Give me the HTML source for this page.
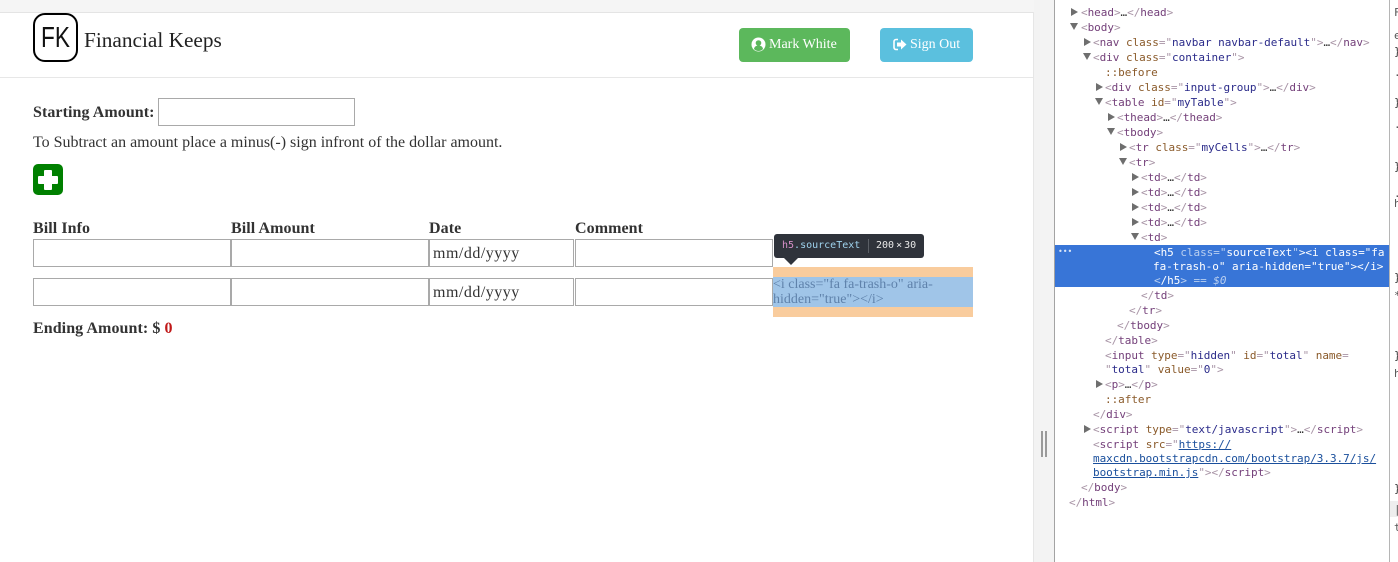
<!DOCTYPE html>
<html><head><meta charset="utf-8"><style>
html,body{margin:0;padding:0;width:1398px;height:562px;overflow:hidden;background:#fff}
div,span.b{position:absolute}
.s{font-family:"Liberation Serif",serif;color:#333;white-space:nowrap;font-size:16px;line-height:20px}
.bd{font-weight:bold;letter-spacing:.07px}
.i{border:1px solid #a9a9a9;background:#fff;box-sizing:border-box;height:28px}
.l{position:absolute;font:11px/15px "DejaVu Sans Mono",monospace;white-space:nowrap;color:#a894a6;letter-spacing:-.04px}
.l b{font-weight:normal;color:#74407a}.l u{text-decoration:none;color:#8a5a2a}.l q{quotes:none;color:#2b2b8a}
.l em{font-style:normal;color:#333}
.ar{position:absolute;width:0;height:0}
.r{border-left:7px solid #6e6e6e;border-top:4px solid transparent;border-bottom:4px solid transparent}
.d{border-top:7px solid #6e6e6e;border-left:4px solid transparent;border-right:4px solid transparent}
.sel,.sel b,.sel u,.sel q{color:#fff}
.dt{padding:4px 3px;letter-spacing:.5px}
</style></head><body>
<div style="left:0;top:0;width:1034px;height:12px;background:#f5f5f5;border-bottom:1px solid #e4e4e4"></div>
<div style="left:1034px;top:0;width:20px;height:562px;background:#f3f3f3"></div>
<div style="left:1033px;top:12px;width:1px;height:550px;background:#e6e6e6"></div>
<div style="left:0;top:77px;width:1033px;height:1px;background:#e7e7e7"></div>
<div style="left:33px;top:13px;width:45px;height:49px;box-sizing:border-box;border:2px solid #000;border-radius:12px"></div>
<div style="left:33px;top:13px;width:45px;height:49px;font:29px/50px 'Liberation Sans',sans-serif;color:#111;text-align:center;transform:scaleX(.78)">FK</div>
<div class="s" style="left:84px;top:27px;font-size:21.300px;line-height:26px;color:#222">Financial Keeps</div>
<div style="left:739px;top:28px;width:111px;height:34px;background:#5cb85c;border-radius:4px"></div>
<svg style="position:absolute;left:751px;top:37px" width="15" height="15" viewBox="0 0 15 15"><circle cx="7.500" cy="7.500" r="7" fill="#fff"/><circle cx="7.500" cy="6" r="2.800" fill="#5cb85c"/><path d="M3 12c.5-2.500 2-3.500 4.500-3.500S11.500 9.500 12 12a6 6 0 0 1-9 0z" fill="#5cb85c"/></svg>
<div class="s" style="left:769px;top:35px;font-size:14px;color:#fff">Mark White</div>
<div style="left:880px;top:28px;width:93px;height:34px;background:#5bc0de;border-radius:4px"></div>
<svg style="position:absolute;left:893px;top:38px" width="14" height="13" viewBox="0 0 14 13"><path d="M5 1.500H3a2 2 0 0 0-2 2v6a2 2 0 0 0 2 2h2" fill="none" stroke="#fff" stroke-width="1.600"/><path d="M4 4.500h4V1.500L13.500 6.500 8 11.500V8.500H4z" fill="#fff"/></svg>
<div class="s" style="left:910px;top:35px;font-size:14px;color:#fff">Sign Out</div>

<div class="s bd" style="left:33px;top:103px">Starting Amount:</div>
<div class="i" style="left:158px;top:98px;width:197px"></div>
<div class="s" style="left:33px;top:133px">To Subtract an amount place a minus(-) sign infront of the dollar amount.</div>
<div style="left:33px;top:164px;width:30px;height:31px;background:#008000;border-radius:5px"></div>
<div style="left:38px;top:176px;width:20px;height:8px;background:#fff;border-radius:1px"></div>
<div style="left:44px;top:170px;width:8px;height:20px;background:#fff;border-radius:1px"></div>

<div class="s bd" style="left:33px;top:219px">Bill Info</div>
<div class="s bd" style="left:231px;top:219px">Bill Amount</div>
<div class="s bd" style="left:429px;top:219px">Date</div>
<div class="s bd" style="left:575px;top:219px">Comment</div>

<div class="i" style="left:33px;top:239px;width:198px"></div>
<div class="i" style="left:231px;top:239px;width:198px"></div>
<div class="i s dt" style="left:429px;top:239px;width:145px">mm/dd/yyyy</div>
<div class="i" style="left:575px;top:239px;width:198px"></div>
<div class="i" style="left:33px;top:278px;width:198px"></div>
<div class="i" style="left:231px;top:278px;width:198px"></div>
<div class="i s dt" style="left:429px;top:278px;width:145px">mm/dd/yyyy</div>
<div class="i" style="left:575px;top:278px;width:198px"></div>

<div style="left:773px;top:267px;width:200px;height:50px;background:#f9cc9d"></div>
<div class="s" style="left:773px;top:277px;width:200px;height:30px;background:#a0c5e8;font-size:14px;line-height:15px;color:#5f82ab;white-space:normal">&lt;i class="fa fa-trash-o" aria-hidden="true"&gt;&lt;/i&gt;</div>
<div style="left:774px;top:234px;width:150px;height:24px;background:#2f333b;border-radius:3px"></div>
<div class="ar" style="left:784px;top:258px;border-top:7px solid #2f333b;border-left:7px solid transparent;border-right:7px solid transparent"></div>
<div style="left:782px;top:238px;font:10px/16px 'DejaVu Sans Mono',monospace;color:#9fd3ee;white-space:nowrap"><span style="color:#d78fc8">h5</span>.sourceText</div>
<div style="left:868px;top:239px;width:1px;height:14px;background:#5b5f66"></div>
<div style="left:876px;top:238px;font:10px/16px 'DejaVu Sans Mono',monospace;color:#e8e8e8;white-space:nowrap;word-spacing:-4px">200 × 30</div>

<div class="s bd" style="left:33px;top:319px">Ending Amount: $ <span style="color:#c01818">0</span></div>

<div style="left:1054px;top:0;width:1px;height:562px;background:#a3a3a3"></div>
<div style="left:1389px;top:0;width:1px;height:562px;background:#b5b5b5"></div>
<div style="left:1041px;top:431px;width:2px;height:26px;background:#9a9a9a"></div>
<div style="left:1045px;top:431px;width:2px;height:26px;background:#9a9a9a"></div>
<div style="left:1055px;top:245px;width:334px;height:42px;background:#3875d7"></div>
<div class="l" style="left:1058px;top:244px;color:#dbe6f7;font-size:8px">•••</div>

<div class="ar r" style="left:1071px;top:8px"></div><div class="l" style="left:1081px;top:5px">&lt;<b>head</b>&gt;<em>…</em>&lt;/<b>head</b>&gt;</div>
<div class="ar d" style="left:1070px;top:23px"></div><div class="l" style="left:1081px;top:20px">&lt;<b>body</b>&gt;</div>
<div class="ar r" style="left:1084px;top:38px"></div><div class="l" style="left:1093px;top:35px">&lt;<b>nav</b> <u>class</u>="<q>navbar navbar-default</q>"&gt;<em>…</em>&lt;/<b>nav</b>&gt;</div>
<div class="ar d" style="left:1083px;top:53px"></div><div class="l" style="left:1093px;top:50px">&lt;<b>div</b> <u>class</u>="<q>container</q>"&gt;</div>
<div class="l" style="left:1105px;top:65px;color:#8a5a2a">::before</div>
<div class="ar r" style="left:1096px;top:83px"></div><div class="l" style="left:1105px;top:80px">&lt;<b>div</b> <u>class</u>="<q>input-group</q>"&gt;<em>…</em>&lt;/<b>div</b>&gt;</div>
<div class="ar d" style="left:1095px;top:98px"></div><div class="l" style="left:1105px;top:95px">&lt;<b>table</b> <u>id</u>="<q>myTable</q>"&gt;</div>
<div class="ar r" style="left:1108px;top:113px"></div><div class="l" style="left:1117px;top:110px">&lt;<b>thead</b>&gt;<em>…</em>&lt;/<b>thead</b>&gt;</div>
<div class="ar d" style="left:1107px;top:128px"></div><div class="l" style="left:1117px;top:125px">&lt;<b>tbody</b>&gt;</div>
<div class="ar r" style="left:1120px;top:143px"></div><div class="l" style="left:1129px;top:140px">&lt;<b>tr</b> <u>class</u>="<q>myCells</q>"&gt;<em>…</em>&lt;/<b>tr</b>&gt;</div>
<div class="ar d" style="left:1119px;top:158px"></div><div class="l" style="left:1129px;top:155px">&lt;<b>tr</b>&gt;</div>
<div class="ar r" style="left:1132px;top:173px"></div><div class="l" style="left:1141px;top:170px">&lt;<b>td</b>&gt;<em>…</em>&lt;/<b>td</b>&gt;</div>
<div class="ar r" style="left:1132px;top:188px"></div><div class="l" style="left:1141px;top:185px">&lt;<b>td</b>&gt;<em>…</em>&lt;/<b>td</b>&gt;</div>
<div class="ar r" style="left:1132px;top:203px"></div><div class="l" style="left:1141px;top:200px">&lt;<b>td</b>&gt;<em>…</em>&lt;/<b>td</b>&gt;</div>
<div class="ar r" style="left:1132px;top:218px"></div><div class="l" style="left:1141px;top:215px">&lt;<b>td</b>&gt;<em>…</em>&lt;/<b>td</b>&gt;</div>
<div class="ar d" style="left:1131px;top:233px"></div><div class="l" style="left:1141px;top:230px">&lt;<b>td</b>&gt;</div>
<div class="l sel" style="left:1154px;top:245px">&lt;h5 <span style="color:#b9cff0">class="</span>sourceText<span style="color:#b9cff0">"</span>&gt;&lt;i class="fa</div>
<div class="l sel" style="left:1153px;top:259px">fa-trash-o" aria-hidden="true"&gt;&lt;/i&gt;</div>
<div class="l sel" style="left:1154px;top:273px"><span style="color:#b9cff0">&lt;</span>/h5<span style="color:#b9cff0">&gt; == <i>$0</i></span></div>
<div class="l" style="left:1141px;top:288px">&lt;/<b>td</b>&gt;</div>
<div class="l" style="left:1129px;top:303px">&lt;/<b>tr</b>&gt;</div>
<div class="l" style="left:1117px;top:318px">&lt;/<b>tbody</b>&gt;</div>
<div class="l" style="left:1105px;top:333px">&lt;/<b>table</b>&gt;</div>
<div class="l" style="left:1105px;top:348px">&lt;<b>input</b> <u>type</u>="<q>hidden</q>" <u>id</u>="<q>total</q>" <u>name</u>=</div>
<div class="l" style="left:1105px;top:362px">"<q>total</q>" <u>value</u>="<q>0</q>"&gt;</div>
<div class="ar r" style="left:1096px;top:380px"></div><div class="l" style="left:1105px;top:377px">&lt;<b>p</b>&gt;<em>…</em>&lt;/<b>p</b>&gt;</div>
<div class="l" style="left:1105px;top:392px;color:#8a5a2a">::after</div>
<div class="l" style="left:1093px;top:407px">&lt;/<b>div</b>&gt;</div>
<div class="ar r" style="left:1084px;top:425px"></div><div class="l" style="left:1093px;top:422px">&lt;<b>script</b> <u>type</u>="<q>text/javascript</q>"&gt;<em>…</em>&lt;/<b>script</b>&gt;</div>
<div class="l" style="left:1093px;top:437px">&lt;<b>script</b> <u>src</u>="<span style="color:#1a4f9c;text-decoration:underline">https://</span></div>
<div class="l" style="left:1093px;top:451px;color:#1a4f9c;text-decoration:underline">maxcdn.bootstrapcdn.com/bootstrap/3.3.7/js/</div>
<div class="l" style="left:1093px;top:465px"><span style="color:#1a4f9c;text-decoration:underline">bootstrap.min.js</span>"&gt;&lt;/<b>script</b>&gt;</div>
<div class="l" style="left:1081px;top:480px">&lt;/<b>body</b>&gt;</div>
<div class="l" style="left:1069px;top:495px">&lt;/<b>html</b>&gt;</div>

<div style="left:1390px;top:501px;width:8px;height:16px;background:#eee"></div>
<div class="l" style="left:1394px;top:5px;color:#555">F</div>
<div class="l" style="left:1394px;top:28px;color:#555">e</div>
<div class="l" style="left:1394px;top:44px;color:#333">}</div>
<div class="l" style="left:1394px;top:65px;color:#555">.</div>
<div class="l" style="left:1394px;top:95px;color:#333">}</div>
<div class="l" style="left:1394px;top:117px;color:#555">.</div>
<div class="l" style="left:1394px;top:159px;color:#333">}</div>
<div class="l" style="left:1394px;top:186px;color:#555">.</div>
<div class="l" style="left:1394px;top:196px;color:#555">h</div>
<div class="l" style="left:1394px;top:270px;color:#333">}</div>
<div class="l" style="left:1394px;top:288px;color:#555">*</div>
<div class="l" style="left:1394px;top:348px;color:#333">}</div>
<div class="l" style="left:1394px;top:366px;color:#555">h</div>
<div class="l" style="left:1394px;top:481px;color:#333">}</div>
<div class="l" style="left:1394px;top:502px;color:#555">|</div>
<div class="l" style="left:1394px;top:520px;color:#555">t</div>
</body></html>
